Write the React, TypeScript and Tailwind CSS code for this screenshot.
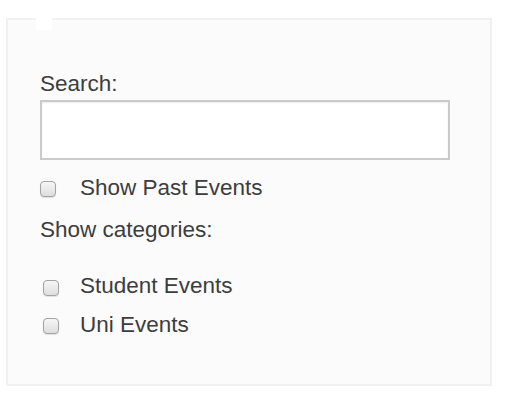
import React from "react";

function Box({ className = "" }: { className?: string }) {
  return (
    <span
      className={
        "inline-block shrink-0 w-[16px] h-[16px] rounded-[4px] border border-[#a2a2a2] bg-gradient-to-b from-[#f6f6f6] to-[#dedede] shadow-[0_1px_1px_rgba(0,0,0,0.1)] " +
        className
      }
    />
  );
}

export default function App() {
  return (
    <div className="w-[510px] h-[402px] bg-white pt-[18px] pl-[6px] font-['Liberation_Sans',Arial,sans-serif] text-[22.5px] leading-[26px] text-[#3d3d3d]">
      <div className="relative w-[486px] h-[368px] border-2 border-[#f0f0f0] bg-[#fbfbfb] pl-[32px] pt-[51px]">
        <div className="absolute left-[28px] top-[-2px] w-[16px] h-[12px] bg-white rounded-b-[2px]" />
        <div>Search:</div>
        <input
          type="text"
          className="mt-[3px] block w-[410px] h-[60px] bg-white border-2 border-[#cacaca] shadow-[inset_0_1px_2px_rgba(0,0,0,0.08)] outline-none"
        />
        <div className="mt-[15px] flex items-center">
          <Box className="translate-y-[1px]" />
          <span className="ml-[24px]">Show Past Events</span>
        </div>
        <div className="mt-[16px]">Show categories:</div>
        <div className="mt-[30px] flex items-center pl-[3px]">
          <Box className="translate-y-[2px]" />
          <span className="ml-[21px]">Student Events</span>
        </div>
        <div className="mt-[13px] flex items-center pl-[3px]">
          <Box className="translate-y-[1px]" />
          <span className="ml-[21px]">Uni Events</span>
        </div>
      </div>
    </div>
  );
}
